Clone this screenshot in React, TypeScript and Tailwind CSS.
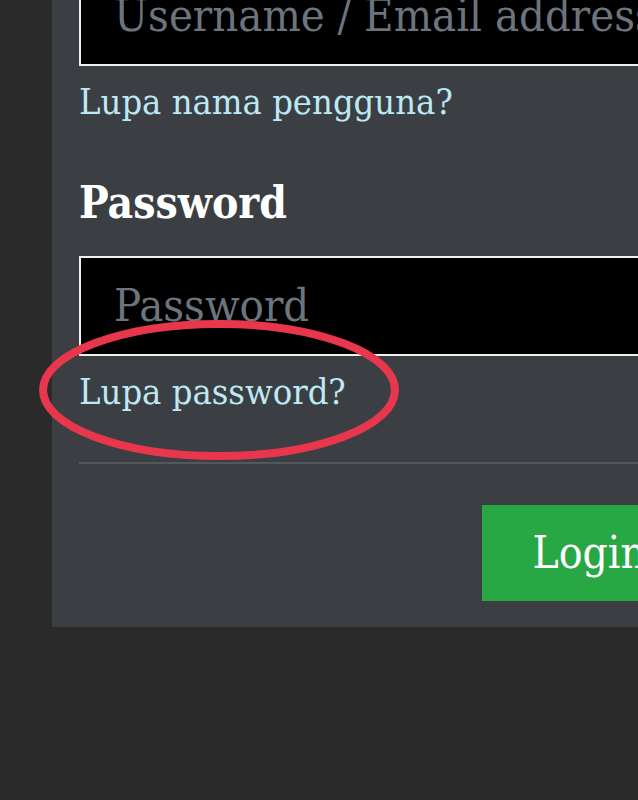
export default function App() {
  return (
    <div
      className="relative w-[638px] h-[800px] overflow-hidden bg-[#2a2a2a]"
      style={{ fontFamily: '"DejaVu Serif Condensed", "Liberation Serif", serif' }}
    >
      <div className="ml-[52px] w-[671px] bg-[#3b3f43] px-[27px] pb-[26px]">
        <div className="-mt-[34px] h-[100px] border-2 border-[#f0f0f0] bg-black pl-[33px] flex items-center">
          <span className="text-[45px] text-[#6c757d] whitespace-nowrap">Username / Email address</span>
        </div>
        <div className="mt-[12px] text-[36px] leading-[48px] text-[#bde9f5]">Lupa nama pengguna?</div>

        <div className="mt-[52px] text-[44px] leading-[50px] font-bold text-white">Password</div>

        <div className="mt-[28px] h-[100px] border-2 border-[#f0f0f0] bg-black pl-[33px] flex items-center">
          <span className="text-[45px] text-[#6c757d]">Password</span>
        </div>
        <div className="mt-[12px] text-[36px] leading-[48px] text-[#bde9f5]">Lupa password?</div>

        <div className="mt-[46px] h-[2px] bg-[#55585b]" />

        <div className="mt-[41px] flex justify-end">
          <button className="h-[96px] bg-[#28a745] px-[50px] text-[44px] text-white whitespace-nowrap">Login</button>
        </div>
      </div>

      <svg className="absolute left-0 top-0 pointer-events-none" width="638" height="800">
        <ellipse cx="219" cy="390" rx="176" ry="66" fill="none" stroke="#e8364d" strokeWidth="8" />
      </svg>
    </div>
  );
}
